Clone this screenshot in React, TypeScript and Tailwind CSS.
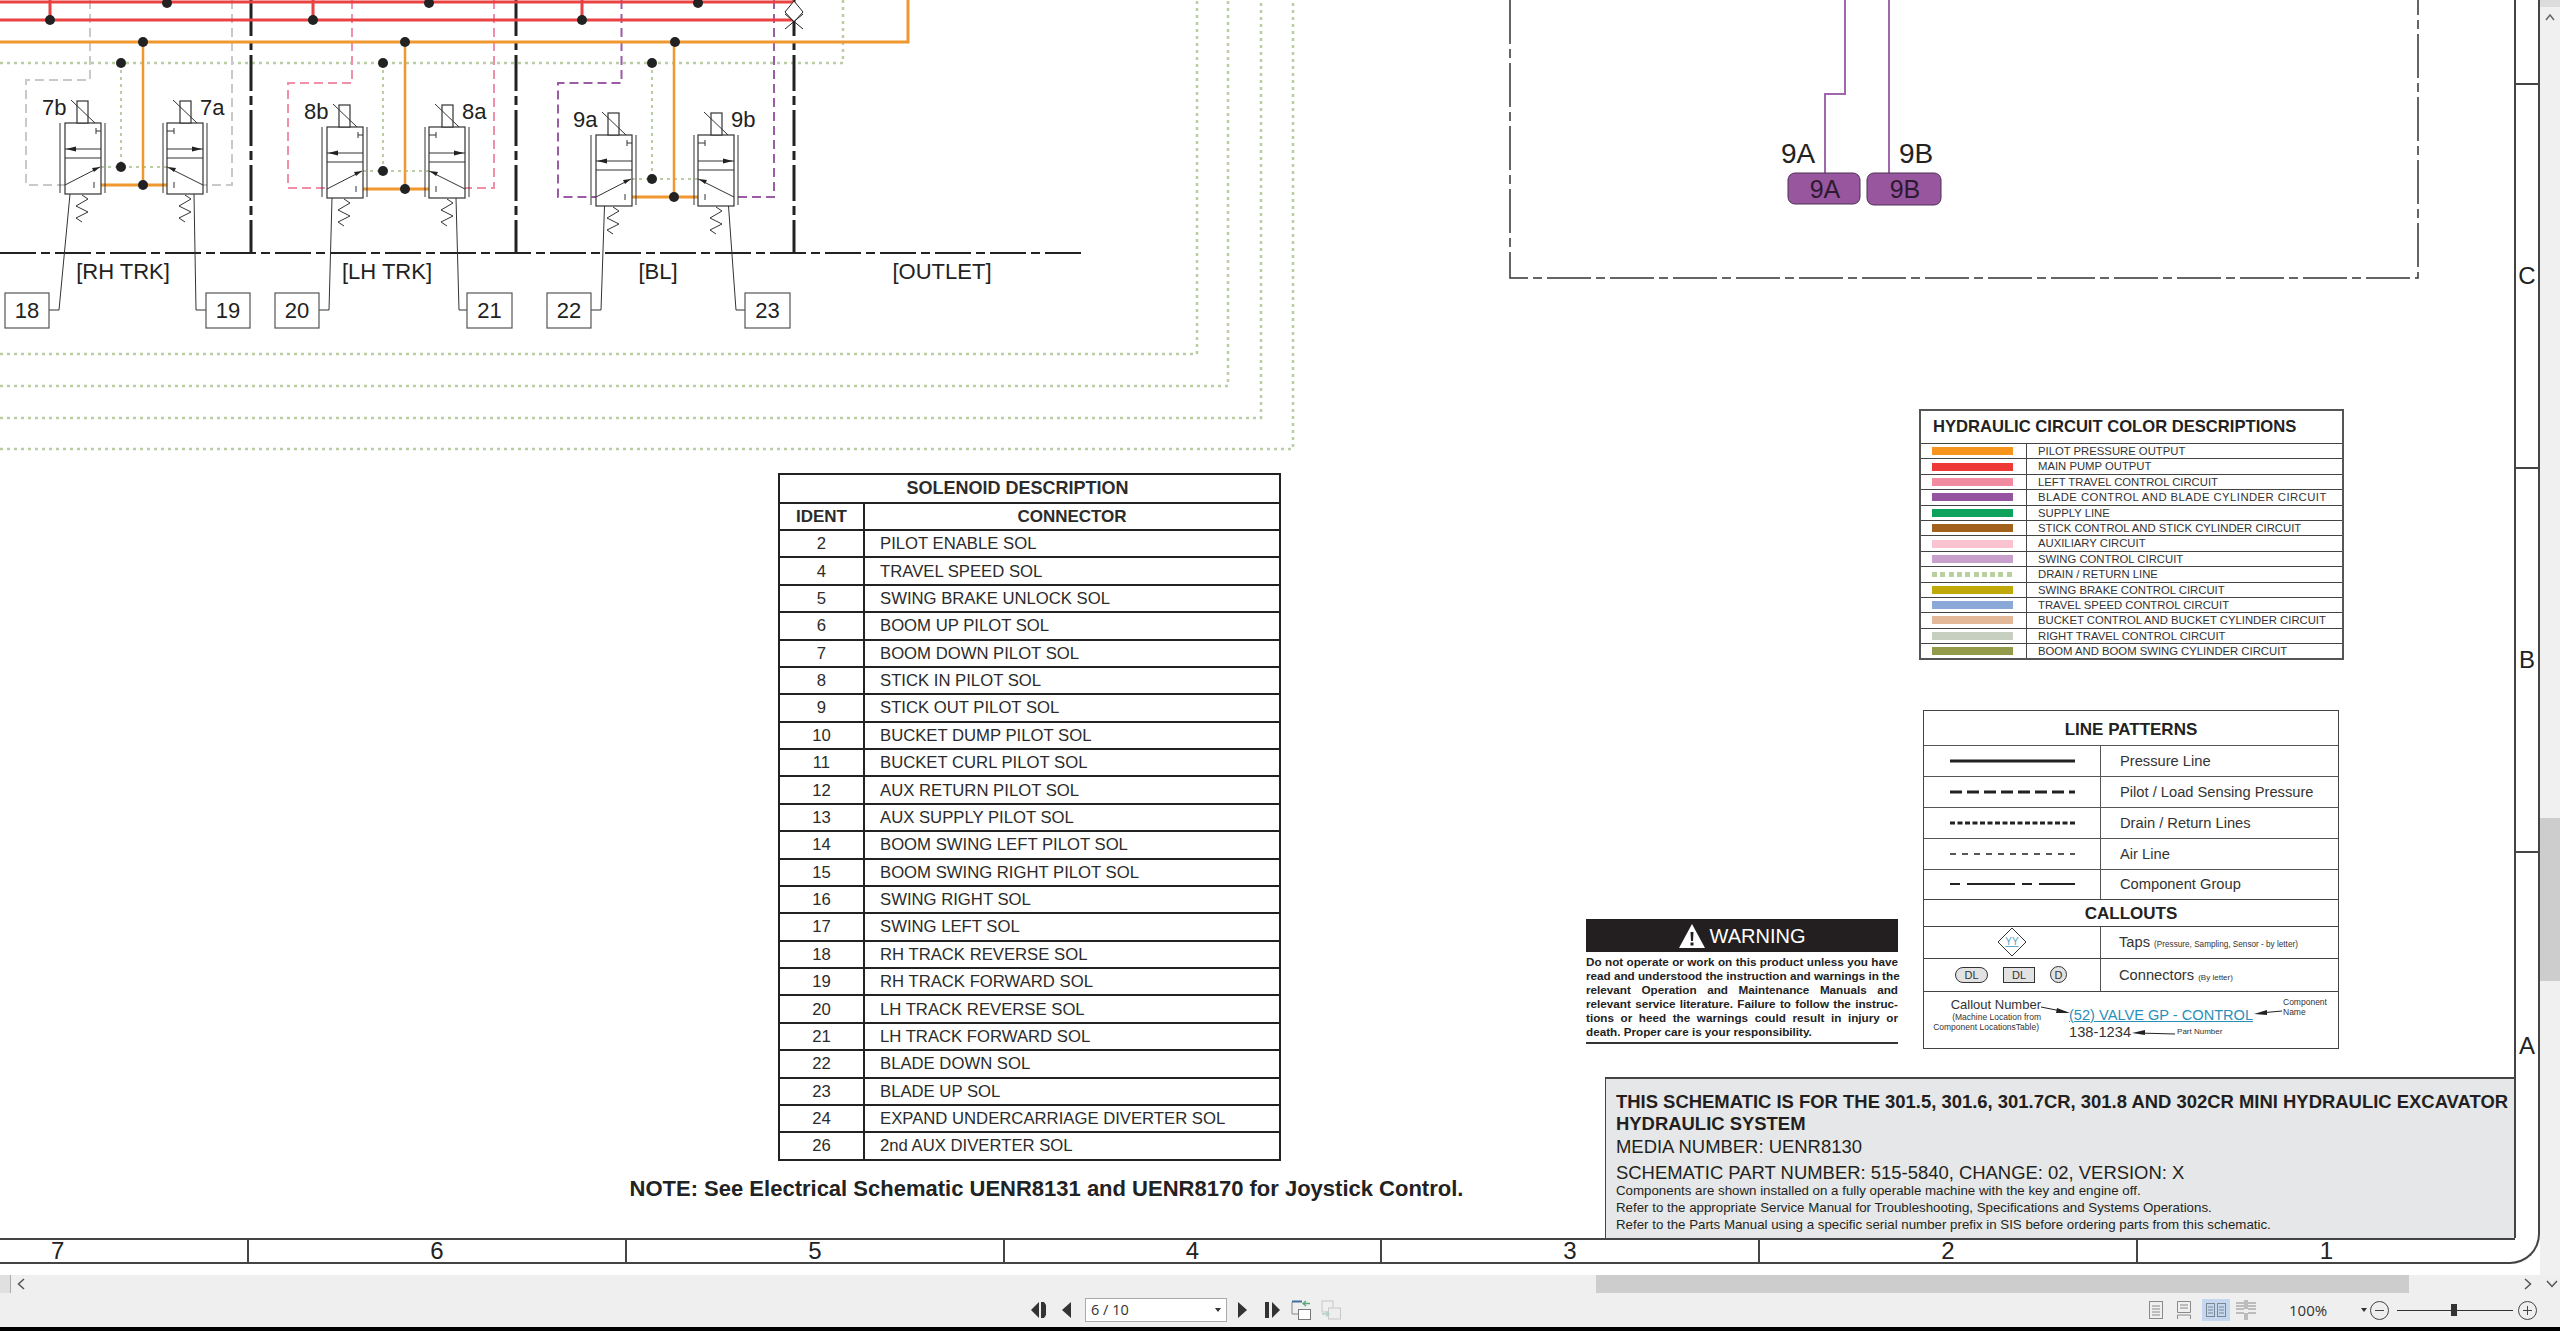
import React from "react";

const FONT = "font-['Liberation_Sans',Arial,sans-serif]";

const solenoids: [string, string][] = [
  ["2", "PILOT ENABLE SOL"],
  ["4", "TRAVEL SPEED SOL"],
  ["5", "SWING BRAKE UNLOCK SOL"],
  ["6", "BOOM UP PILOT SOL"],
  ["7", "BOOM DOWN PILOT SOL"],
  ["8", "STICK IN PILOT SOL"],
  ["9", "STICK OUT PILOT SOL"],
  ["10", "BUCKET DUMP PILOT SOL"],
  ["11", "BUCKET CURL PILOT SOL"],
  ["12", "AUX RETURN PILOT SOL"],
  ["13", "AUX SUPPLY PILOT SOL"],
  ["14", "BOOM SWING LEFT PILOT SOL"],
  ["15", "BOOM SWING RIGHT PILOT SOL"],
  ["16", "SWING RIGHT SOL"],
  ["17", "SWING LEFT SOL"],
  ["18", "RH TRACK REVERSE SOL"],
  ["19", "RH TRACK FORWARD SOL"],
  ["20", "LH TRACK REVERSE SOL"],
  ["21", "LH TRACK FORWARD SOL"],
  ["22", "BLADE DOWN SOL"],
  ["23", "BLADE UP SOL"],
  ["24", "EXPAND UNDERCARRIAGE DIVERTER SOL"],
  ["26", "2nd AUX DIVERTER SOL"],
];

// last item: swatch height, and letter spacing where a row runs wider than the rest
const circuits: [string, string, string][] = [
  ["h-[8px] bg-[#f7941e]", "PILOT PRESSURE OUTPUT", ""],
  ["h-[8px] bg-[#ed3a37]", "MAIN PUMP OUTPUT", ""],
  ["h-[8px] bg-[#f18ca0]", "LEFT TRAVEL CONTROL CIRCUIT", ""],
  ["h-[8px] bg-[#9554a0]", "BLADE CONTROL AND BLADE CYLINDER CIRCUIT", "tracking-[0.45px]"],
  ["h-[8px] bg-[#0ea35c]", "SUPPLY LINE", ""],
  ["h-[8px] bg-[#a0621c]", "STICK CONTROL AND STICK CYLINDER CIRCUIT", ""],
  ["h-[8px] bg-[#fbc3d0]", "AUXILIARY CIRCUIT", ""],
  ["h-[8px] bg-[#c9a0cc]", "SWING CONTROL CIRCUIT", ""],
  ["h-[5px] bg-[repeating-linear-gradient(90deg,#b8cfa0_0,#b8cfa0_5px,transparent_5px,transparent_8.3px)]", "DRAIN / RETURN LINE", ""],
  ["h-[8px] bg-[#c1a90a]", "SWING BRAKE CONTROL CIRCUIT", ""],
  ["h-[8px] bg-[#8aa9d8]", "TRAVEL SPEED CONTROL CIRCUIT", ""],
  ["h-[8px] bg-[#e2b898]", "BUCKET CONTROL AND BUCKET CYLINDER CIRCUIT", ""],
  ["h-[8px] bg-[#c6cfc0]", "RIGHT TRAVEL CONTROL CIRCUIT", ""],
  ["h-[8px] bg-[#939b4b]", "BOOM AND BOOM SWING CYLINDER CIRCUIT", ""],
];

const linePatterns: [string, number, string | undefined, string][] = [
  ["Pressure Line", 3, undefined, "h-[31px]"],
  ["Pilot / Load Sensing Pressure", 3, "12 5", "h-[31px]"],
  ["Drain / Return Lines", 3, "5 2.5", "h-[31px]"],
  ["Air Line", 1.5, "6 6", "h-[31px]"],
  ["Component Group", 2, "10 7 48 7", "h-[30px]"],
];

const warningLines = [
  "Do not operate or work on this product unless you have",
  "read and understood the instruction and warnings in the",
  "relevant Operation and Maintenance Manuals and",
  "relevant service literature. Failure to follow the instruc-",
  "tions or heed the warnings could result in injury or",
];

const RED = "#ea4242";
const ORANGE = "#f0982f";
const DRAIN = "#b9cfa3";
const INK = "#333";

function Dot({ x, y }: { x: number; y: number }) {
  return <ellipse cx={x} cy={y} rx={5} ry={5} fill="#222" />;
}

type ValveGroupProps = {
  dx: number;
  dy: number;
  color: string;
  leftPilot: string;
  rightPilot: string;
  names: [string, string];
  leftLeader: string;
  rightLeader: string;
};

function Spring({ x }: { x: number }) {
  return (
    <polyline
      points={`${x},195 ${x + 6},199 ${x - 6},206 ${x + 6},212 ${x - 6},218 ${x},222`}
      fill="none"
      stroke={INK}
      strokeWidth={1}
    />
  );
}

function ValveGroup({ dx, dy, color, leftPilot, rightPilot, names, leftLeader, rightLeader }: ValveGroupProps) {
  return (
    <g>
      <path d={leftPilot} fill="none" stroke={color} strokeWidth={2} strokeDasharray="9 5" />
      <path d={rightPilot} fill="none" stroke={color} strokeWidth={2} strokeDasharray="9 5" />
      <path d={leftLeader} fill="none" stroke={INK} strokeWidth={1} />
      <path d={rightLeader} fill="none" stroke={INK} strokeWidth={1} />
      <g transform={`translate(${dx} ${dy})`}>
        <path d={`M121 ${63 - dy} V167`} stroke={DRAIN} strokeWidth={2} strokeDasharray="3 4" />
        <path d="M101 167 H167" stroke={DRAIN} strokeWidth={2} strokeDasharray="3 4" />
        <path d={`M143 ${42 - dy} V185`} stroke={ORANGE} strokeWidth={2.5} />
        <path d="M94 185 H174" stroke={ORANGE} strokeWidth={3} />
        <Dot x={121} y={167} />
        <Dot x={143} y={185} />
        <g fill="#fff" stroke={INK} strokeWidth={1.2}>
          <rect x={65} y={123} width={36} height={71} />
          <rect x={167} y={123} width={36} height={71} />
          <rect x={77} y={101} width={11} height={22} />
          <rect x={180} y={101} width={11} height={22} />
        </g>
        <g fill="none" stroke={INK} strokeWidth={1}>
          <path d="M60 123 V193 M105 123 V193 M163 123 V193 M207 123 V193" />
          <path d="M71 100 L95 123 M173 100 L197 123" />
          <path d="M65 149 H101 M65 158 H101 M167 149 H203 M167 158 H203" />
          <path d="M65 185 L100 167 M167 167 L203 185" />
          <path d="M96 128 V134 M96 131 H101 M174 128 V134 M167 131 H174" />
          <path d="M94 182 V188 M174 182 V188" />
        </g>
        <path d="M66 149 L76 146.5 V151.5 Z M202 149 L192 146.5 V151.5 Z M100 167 L92 168 L94 172 Z M168 167 L176 168 L174 172 Z" fill="#222" />
        <Spring x={82} />
        <Spring x={185} />
        <text x={42} y={115} fontSize={22} fill="#222">{names[0]}</text>
        <text x={200} y={115} fontSize={22} fill="#222">{names[1]}</text>
      </g>
    </g>
  );
}

function NumberBox({ x, w, label }: { x: number; w: number; label: string }) {
  return (
    <g>
      <rect x={x} y={293} width={w} height={35} fill="#fff" stroke="#555" strokeWidth={1.2} />
      <text x={x + w / 2} y={318} fontSize={22} textAnchor="middle" fill="#222">{label}</text>
    </g>
  );
}

function Schematic() {
  const dash = "36 5 9 5";
  return (
    <svg className="absolute left-0 top-0" width={2514} height={1238} fontFamily="'Liberation Sans', Arial, sans-serif">
      <g fill="none" stroke={DRAIN} strokeWidth={2.5} strokeDasharray="3 4">
        <path d="M0 63 H843 V0" />
        <path d="M0 354 H1197 V0" />
        <path d="M0 386 H1228 V0" />
        <path d="M0 418 H1261 V0" />
        <path d="M0 449 H1293 V0" />
      </g>
      <g fill="none" stroke="#222" strokeDasharray={dash}>
        <path d="M251 0 V253" strokeWidth={3} />
        <path d="M516 0 V253" strokeWidth={3} />
        <path d="M794 0 V253" strokeWidth={3} />
        <path d="M0 253 H1083" strokeWidth={2} />
      </g>
      <path d="M517 2 H573" stroke="#222" strokeWidth={1} />

      <ValveGroup
        dx={0}
        dy={0}
        color="#c9c9c9"
        leftPilot="M90 0 V80 H26 V185 H65"
        rightPilot="M232 0 V185 H203"
        names={["7b", "7a"]}
        leftLeader="M70 194 L59 310 H49"
        rightLeader="M194 194 L196 310 H206"
      />
      <ValveGroup
        dx={262}
        dy={4}
        color="#f08fa8"
        leftPilot="M352 0 V83 H288 V188 H327"
        rightPilot="M494 0 V188 H465"
        names={["8b", "8a"]}
        leftLeader="M332 198 L329 310 H319"
        rightLeader="M456 198 L459 310 H467"
      />
      <ValveGroup
        dx={531}
        dy={12}
        color="#9b5ba5"
        leftPilot="M621.5 0 V83 H558 V197 H596"
        rightPilot="M774 0 V197 H735"
        names={["9a", "9b"]}
        leftLeader="M604.5 206 L601 310 H591"
        rightLeader="M728.5 206 L736 310 H745"
      />

      <path d="M0 2 H794 M0 20 H794 M50 0 V20 M313 0 V20 M582 0 V20" fill="none" stroke={RED} strokeWidth={3} />
      <path d="M0 42 H908 V0" fill="none" stroke={ORANGE} strokeWidth={3} />
      {[[50, 20], [167, 3], [313, 20], [429, 3], [582, 20], [698, 3], [143, 42], [405, 42], [675, 42], [121, 63], [383, 63], [652, 63]].map(([x, y]) => (
        <Dot key={`${x}-${y}`} x={x} y={y} />
      ))}
      <path d="M794 1 L785 12 L794 22 L803 12 Z" fill="#fff" stroke="#222" strokeWidth={1} />
      <path d="M785 29 L803 14 M803 29 L785 14" stroke="#222" strokeWidth={1} />

      <g fontSize={22} fill="#222" textAnchor="middle">
        <text x={123} y={278.5}>[RH TRK]</text>
        <text x={387} y={278.5}>[LH TRK]</text>
        <text x={658} y={278.5}>[BL]</text>
        <text x={942} y={278.5}>[OUTLET]</text>
      </g>
      <NumberBox x={5} w={44} label="18" />
      <NumberBox x={206} w={44} label="19" />
      <NumberBox x={275} w={44} label="20" />
      <NumberBox x={467} w={45} label="21" />
      <NumberBox x={547} w={44} label="22" />
      <NumberBox x={745} w={45} label="23" />

      <path d="M1510 0 V278 H2418 V0" fill="none" stroke="#333" strokeWidth={1.5} strokeDasharray="44 5 9 5" />
      <path d="M1845 0 V94 H1825 V173 M1889 0 V173" fill="none" stroke="#a266ad" strokeWidth={2} />
      <text x={1781} y={163} fontSize={28} fill="#222">9A</text>
      <text x={1899} y={163} fontSize={28} fill="#222">9B</text>
      <rect x={1788} y={173} width={72} height={31} rx={7} fill="#98569f" stroke="#4a3050" />
      <rect x={1867} y={173} width={74} height={32} rx={7} fill="#98569f" stroke="#4a3050" />
      <text x={1825} y={198} fontSize={25} fill="#2c1a30" textAnchor="middle">9A</text>
      <text x={1905} y={198} fontSize={25} fill="#2c1a30" textAnchor="middle">9B</text>
    </svg>
  );
}

function SolenoidTable() {
  return (
    <div className="ml-[149px] w-[503px] border-2 border-[#222] text-[#2b2b2b]">
      <div className="flex h-[27px] items-center justify-center pr-[24px] text-[18px] font-bold">SOLENOID DESCRIPTION</div>
      <div className="flex h-[27px] items-center border-t-2 border-[#222] text-[17px] font-bold">
        <div className="flex h-full w-[85px] items-center justify-center border-r-2 border-[#222]">IDENT</div>
        <div className="flex-1 text-center">CONNECTOR</div>
      </div>
      {solenoids.map(([ident, name]) => (
        <div key={ident} className="flex h-[27.39px] items-center border-t-2 border-[#222] text-[16.7px]">
          <div className="flex h-full w-[85px] items-center justify-center border-r-2 border-[#222]">{ident}</div>
          <div className="pl-[15px]">{name}</div>
        </div>
      ))}
    </div>
  );
}

function CircuitTable() {
  return (
    <div className="ml-[333px] w-[425px] border-2 border-[#555] text-[#333]">
      <div className="flex h-[32px] items-center pl-[12px] text-[16.6px] font-bold text-[#222]">HYDRAULIC CIRCUIT COLOR DESCRIPTIONS</div>
      {circuits.map(([swatch, name, spacing]) => (
        <div key={name} className="flex h-[15.4px] items-center border-t-[1.5px] border-[#444] text-[11.3px] leading-none">
          <div className="flex h-full w-[106px] shrink-0 items-center border-r-[1.5px] border-[#444] pl-[11px]">
            <div className={`w-[81px] ${swatch}`} />
          </div>
          <div className={`pt-[1px] pl-[11px] whitespace-nowrap ${spacing}`}>{name}</div>
        </div>
      ))}
    </div>
  );
}

function WarningBox() {
  return (
    <div className="mt-[209px] w-[312px]">
      <div className="flex h-[33px] items-center justify-center gap-[5px] bg-[#231f20] text-[20px] text-white">
        <svg width="26" height="24" viewBox="0 0 26 24">
          <path d="M13 0 L26 24 H0 Z" fill="#fff" />
          <path d="M11.5 8 H14.5 L14 17 H12 Z M11.5 18.5 H14.5 V21.5 H11.5 Z" fill="#231f20" />
        </svg>
        <span>WARNING</span>
      </div>
      <div className="mt-[2.5px] border-b-2 border-[#333] pb-[3.5px] text-[11.7px] leading-[14px] font-bold text-[#222]">
        {warningLines.map((line) => (
          <div key={line} className="whitespace-nowrap text-justify [text-align-last:justify]">{line}</div>
        ))}
        <div>death. Proper care is your responsibility.</div>
      </div>
    </div>
  );
}

function LineKey({ width, dash }: { width: number; dash?: string }) {
  return (
    <svg width="125" height="6" viewBox="0 0 125 6">
      <line x1="0" y1="3" x2="125" y2="3" stroke="#222" strokeWidth={width} strokeDasharray={dash} />
    </svg>
  );
}

function LegendTable() {
  return (
    <div className="ml-[25px] w-[416px] border-[1.5px] border-[#444] text-[14.7px] text-[#333]">
      <div className="flex h-[33.5px] items-center justify-center pt-[4px] text-[17px] font-bold text-[#222]">LINE PATTERNS</div>
      {linePatterns.map(([name, width, dash, height]) => (
        <div key={name} className={`flex items-center border-t-[1.5px] border-[#555] ${height}`}>
          <div className="flex h-full w-[177px] items-center justify-center border-r-[1.5px] border-[#555]">
            <LineKey width={width} dash={dash} />
          </div>
          <div className="pl-[19px]">{name}</div>
        </div>
      ))}
      <div className="flex h-[27px] items-center justify-center border-t-[1.5px] border-[#444] pt-[2px] text-[17px] font-bold text-[#222]">CALLOUTS</div>
      <div className="flex h-[32px] items-center border-t-[1.5px] border-[#444]">
        <div className="flex h-full w-[177px] items-center justify-center border-r-[1.5px] border-[#555]">
          <svg width="30" height="30" viewBox="0 0 30 30">
            <path d="M15 1 L29 15 L15 29 L1 15 Z" fill="#fff" stroke="#333" strokeWidth={1} />
            <text x="15" y="18" fontSize="10" textAnchor="middle" fill="#5aa6c4" textDecoration="underline" fontFamily="'Liberation Sans', Arial, sans-serif">YY</text>
          </svg>
        </div>
        <div className="pl-[18px]">Taps <span className="text-[8.2px]">(Pressure, Sampling, Sensor - by letter)</span></div>
      </div>
      <div className="flex h-[33px] items-center border-t-[1.5px] border-[#444]">
        <div className="flex h-full w-[177px] items-center gap-[15px] border-r-[1.5px] border-[#555] pl-[31px] text-[11px]">
          <div className="flex h-[16px] w-[33px] items-center justify-center rounded-full border border-[#333] bg-[#e2e2e2]">DL</div>
          <div className="flex h-[16px] w-[32px] items-center justify-center border border-[#333] bg-[#e2e2e2]">DL</div>
          <div className="flex size-[17px] items-center justify-center rounded-full border border-[#333] bg-[#e2e2e2]">D</div>
        </div>
        <div className="pl-[18px]">Connectors <span className="text-[8px]">(By letter)</span></div>
      </div>
      <div className="relative flex h-[57px] border-t-[1.5px] border-[#444]">
        <div className="flex w-[117px] flex-col items-end pt-[5px] text-[8.5px] leading-[10px]">
          <div className="text-[13px] leading-[15px]">Callout Number</div>
          <div>(Machine Location from</div>
          <div className="mr-[2px] whitespace-nowrap">Component LocationsTable)</div>
        </div>
        <div className="ml-[28px] flex w-[184px] flex-col pt-[14px]">
          <div className="text-[14.6px] leading-[18px] whitespace-nowrap text-[#2a8fb8] underline">(52) VALVE GP - CONTROL</div>
          <div className="flex items-center gap-[46px] text-[14.7px] leading-[16px]">
            <span>138-1234</span>
            <span className="text-[8px]">Part Number</span>
          </div>
        </div>
        <div className="ml-[30px] pt-[5px] text-[8.5px] leading-[10px]">
          <div>Component</div>
          <div>Name</div>
        </div>
        <svg className="absolute left-0 top-0" width="416" height="57" viewBox="0 0 416 57">
          <path d="M117 15 L142 20 M358 19 L336 21 M251 42 L214 41" stroke="#222" strokeWidth={1} fill="none" />
          <path d="M146 21 L133 16 L132 21 Z M330 22 L343 18 L343 23 Z M208 41 L221 38 L221 43 Z" fill="#222" />
        </svg>
      </div>
    </div>
  );
}

function TitleBlock() {
  return (
    <div className="mt-[28.5px] ml-[19px] flex-1 border-t-2 border-l-[1.5px] border-[#444] bg-[#e6e7e8] pl-[10px] text-[18.45px] text-[#231f20]">
      <div className="mt-[11.5px] leading-[22px] font-bold whitespace-nowrap">THIS SCHEMATIC IS FOR THE 301.5, 301.6, 301.7CR, 301.8 AND 302CR MINI HYDRAULIC EXCAVATOR</div>
      <div className="leading-[22px] font-bold">HYDRAULIC SYSTEM</div>
      <div className="leading-[24px]">MEDIA NUMBER: UENR8130</div>
      <div className="mt-[1px] leading-[25px]">SCHEMATIC PART NUMBER: 515-5840, CHANGE: 02, VERSION: X</div>
      <div className="-mt-[3px] text-[13.3px] leading-[17px]">
        <div>Components are shown installed on a fully operable machine with the key and engine off.</div>
        <div>Refer to the appropriate Service Manual for Troubleshooting, Specifications and Systems Operations.</div>
        <div>Refer to the Parts Manual using a specific serial number prefix in SIS before ordering parts from this schematic.</div>
      </div>
    </div>
  );
}

function Ruler() {
  const cells: [string, string][] = [
    ["7", "w-[249px] pl-[51px] justify-start"],
    ["6", "w-[378px] justify-center"],
    ["5", "w-[378px] justify-center"],
    ["4", "w-[377px] justify-center"],
    ["3", "w-[378px] justify-center"],
    ["2", "w-[378px] justify-center"],
  ];
  return (
    <div className="flex h-[24px] text-[24px] leading-none text-[#222]">
      {cells.map(([n, cls]) => (
        <div key={n} className={`flex items-center border-t-2 border-r-2 border-[#444] ${cls}`}>{n}</div>
      ))}
      <div className="flex w-[377px] items-center justify-center border-t-2 border-[#444]">1</div>
    </div>
  );
}

function PageNav() {
  return (
    <div className="ml-[1031px] flex items-center">
      <svg width="16" height="16" viewBox="0 0 16 16" fill="#333"><path d="M0 8 L8 0 V16 Z M10 0 H13 L15 3 V13 L13 16 H10 Z" /></svg>
      <svg className="ml-[15px]" width="10" height="16" viewBox="0 0 10 16" fill="#333"><path d="M0 8 L9 0 V16 Z" /></svg>
      <div className="ml-[13px] flex h-[24px] w-[142px] items-center justify-between border border-[#aaa] bg-white px-[5px] text-[14.5px] text-[#333]">
        <span className="font-['Open_Sans',sans-serif]">6 / 10</span>
        <svg width="6" height="4" viewBox="0 0 6 4" fill="#333"><path d="M0 0 H6 L3 4 Z" /></svg>
      </div>
      <svg className="ml-[10px]" width="10" height="16" viewBox="0 0 10 16" fill="#333"><path d="M10 8 L1 0 V16 Z" /></svg>
      <svg className="ml-[17px]" width="16" height="16" viewBox="0 0 16 16" fill="#333"><path d="M16 8 L8 0 V16 Z M1 0 H5 V16 H1 Z" /></svg>
      <svg className="ml-[11px]" width="20" height="20" viewBox="0 0 20 20" fill="none">
        <path d="M1 1.5 H11" stroke="#3f6f9c" strokeWidth={2} />
        <path d="M1 2 V14 H7" stroke="#888" strokeWidth={1} />
        <rect x="7.5" y="9.5" width="12" height="10" stroke="#777" fill="#fff" />
        <path d="M19 3.5 H12 M15 1 L12 3.5 L15 6" stroke="#5aa77a" strokeWidth={1.4} />
      </svg>
      <svg className="ml-[10px]" width="20" height="20" viewBox="0 0 20 20" fill="none" opacity={0.45}>
        <rect x="1" y="1" width="11" height="11" stroke="#999" />
        <rect x="7.5" y="8" width="12" height="11" stroke="#999" fill="#eee" />
        <path d="M1 14 H8 M5 11.5 L8 14 L5 16.5" stroke="#6ab08a" strokeWidth={1.3} />
      </svg>
    </div>
  );
}

function ZoomTools() {
  const line = "#8a8a8a";
  return (
    <div className="ml-[808px] flex items-center">
      <svg width="14" height="18" viewBox="0 0 14 18" fill="none" stroke={line}><rect x="0.5" y="0.5" width="13" height="17" /><path d="M3 5 H11 M3 8 H11 M3 11 H11 M3 14 H11" /></svg>
      <svg className="ml-[14px]" width="14" height="18" viewBox="0 0 14 18" fill="none" stroke={line}><path d="M0.5 0.5 H13.5 V11.5 H0.5 Z M3 4 H11 M3 7 H11 M0.5 14 H13.5 M0.5 14 V18 M13.5 14 V18" /></svg>
      <div className="ml-[11px] flex h-[22px] w-[28px] items-center justify-center bg-[#c4d7ee]">
        <svg width="20" height="14" viewBox="0 0 20 14" fill="none" stroke="#7a8896"><rect x="0.5" y="0.5" width="8" height="13" /><rect x="11.5" y="0.5" width="8" height="13" /><path d="M2 4 H7 M2 7 H7 M2 10 H7 M13 4 H18 M13 7 H18 M13 10 H18" /></svg>
      </div>
      <svg className="ml-[6px]" width="20" height="20" viewBox="0 0 20 20" fill="none" stroke={line}><path d="M0 3 H8 M0 6 H8 M0 9 H8 M12 3 H20 M12 6 H20 M12 9 H20 M0 13 H8 M12 13 H20 M9 0 V9 M11 0 V9 M9 13 V20 M11 13 V20" /></svg>
      <span className="ml-[33px] w-[38px] font-['Open_Sans',sans-serif] text-[15px] text-[#333]">100%</span>
      <svg className="ml-[34px]" width="6" height="4" viewBox="0 0 6 4" fill="#333"><path d="M0 0 H6 L3 4 Z" /></svg>
      <svg className="ml-[3px]" width="19" height="19" viewBox="0 0 19 19" fill="none" stroke="#444"><circle cx="9.5" cy="9.5" r="9" /><path d="M5 9.5 H14" /></svg>
      <div className="relative ml-[8px] flex h-[12px] w-[116px] items-center">
        <div className="h-px w-full bg-[#333]" />
        <div className="absolute left-[54px] h-[12px] w-[6px] bg-[#333]" />
      </div>
      <svg className="ml-[5px]" width="19" height="19" viewBox="0 0 19 19" fill="none" stroke="#444"><circle cx="9.5" cy="9.5" r="9" /><path d="M5 9.5 H14 M9.5 5 V14" /></svg>
    </div>
  );
}

export default function App() {
  return (
    <div className={`flex h-[1331px] w-[2560px] flex-col overflow-hidden bg-white ${FONT}`}>
      <div className="flex h-[1275px]">
        <div className="w-[2540px]">
          <div className="h-[1264px] rounded-br-[30px] border-r-2 border-b-2 border-[#444]">
            <div className="flex h-[1238px]">
              <div className="relative w-[2516px] border-r-2 border-[#444]">
                <Schematic />
                <div className="relative flex h-full pl-[629px]">
                  <div className="w-[835px] pt-[473px]">
                    <SolenoidTable />
                    <div className="mt-[15px] text-center text-[22px] leading-[26px] font-bold whitespace-nowrap text-[#222]">
                      NOTE: See Electrical Schematic UENR8131 and UENR8170 for Joystick Control.
                    </div>
                  </div>
                  <div className="ml-[122px] flex w-[928px] flex-col pt-[409px]">
                    <CircuitTable />
                    <div className="mt-[50px] flex items-start">
                      <WarningBox />
                      <LegendTable />
                    </div>
                    <TitleBlock />
                  </div>
                </div>
              </div>
              <div className="flex flex-1 flex-col text-[24px] leading-none text-[#222]">
                <div className="h-[85px] border-b-2 border-[#444]" />
                <div className="flex h-[384px] items-center justify-center border-b-2 border-[#444]">C</div>
                <div className="flex h-[384px] items-center justify-center border-b-2 border-[#444]">B</div>
                <div className="flex flex-1 items-center justify-center">A</div>
              </div>
            </div>
            <Ruler />
          </div>
        </div>
        <div className="flex flex-1 flex-col bg-[#f0f0f0]">
          <div className="h-[7px] bg-[#dcdcdc]" />
          <div className="mt-[6px] flex justify-center text-[#555]">
            <svg width="10" height="8" viewBox="0 0 10 8" fill="none" stroke="#666" strokeWidth={1.5}><path d="M1 7 L5 2 L9 7" /></svg>
          </div>
          <div className="mt-[797px] h-[163px] bg-[#cdcdcd]" />
        </div>
      </div>

      <div className="flex h-[18px] items-center bg-[#efefef]">
        <div className="h-full w-[11px] border-r border-[#aaa] bg-[#e0e0e0]" />
        <svg className="ml-[6px]" width="8" height="12" viewBox="0 0 8 12" fill="none" stroke="#555" strokeWidth={1.5}><path d="M7 1 L1.5 6 L7 11" /></svg>
        <div className="ml-[1571px] h-full w-[813px] bg-[#cdcdcd]" />
        <svg className="ml-[115px]" width="8" height="12" viewBox="0 0 8 12" fill="none" stroke="#555" strokeWidth={1.5}><path d="M1 1 L6.5 6 L1 11" /></svg>
        <svg className="ml-[14px]" width="12" height="8" viewBox="0 0 12 8" fill="none" stroke="#555" strokeWidth={1.5}><path d="M1 1 L6 6.5 L11 1" /></svg>
      </div>

      <div className="flex h-[34px] items-center bg-[#efefef]">
        <PageNav />
        <ZoomTools />
      </div>
      <div className="h-[4px] bg-black" />
    </div>
  );
}
